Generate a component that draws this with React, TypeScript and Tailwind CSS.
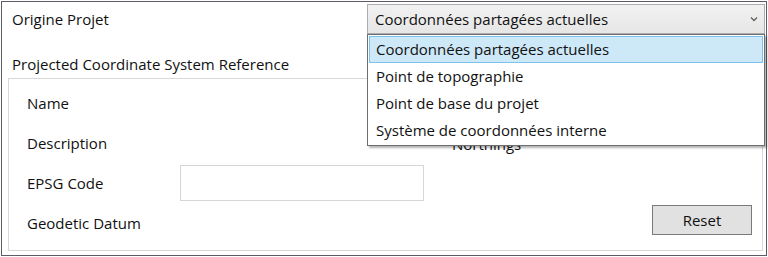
const OPTIONS = [
  "Coordonnées partagées actuelles",
  "Point de topographie",
  "Point de base du projet",
  "Système de coordonnées interne",
];

function Chevron() {
  return (
    <svg width="8" height="6" viewBox="0 0 8 6" className="shrink-0">
      <polyline points="1,1.5 4,4.5 7,1.5" fill="none" stroke="#606060" strokeWidth="1.3" />
    </svg>
  );
}

export default function App() {
  return (
    <div
      className="relative w-[768px] h-[257px] bg-white p-px text-[15px] text-[#111]"
      style={{ fontFamily: '"Open Sans", "Noto Sans", sans-serif' }}
    >
      <div className="h-full border border-[#5c5c66] flex flex-col">
        {/* Top row */}
        <div className="flex items-center h-[30px] mt-[2px]">
          <span className="pl-[10px]">Origine Projet</span>
          <div className="ml-auto mr-px w-[398px] h-[30px] flex items-center justify-between pl-[7px] pr-[6px] border border-[#adadad] bg-gradient-to-b from-[#f2f2f2] to-[#e6e6e6]">
            <span>{OPTIONS[0]}</span>
            <Chevron />
          </div>
        </div>

        {/* Group title */}
        <div className="mt-[20px] h-[20px] leading-[20px] pl-[10px]">
          Projected Coordinate System Reference
        </div>

        {/* Group box */}
        <div className="mt-[4px] ml-[6px] w-[755px] h-[173px] border border-[#d8d8d8] pt-[4px] pl-[18px] grid grid-cols-[153px_272px_1fr] grid-rows-[40px_40px_40px_40px] items-center">
          <span>Name</span>
          <span />
          <span />

          <span>Description</span>
          <span />
          <span className="mt-[2px]">Northings</span>

          <span>EPSG Code</span>
          <div className="w-[244px] h-[36px] border border-[#d6d6d6] bg-white" />
          <span />

          <span>Geodetic Datum</span>
          <span />
          <div className="self-start mt-[2px] justify-self-end mr-[10px] w-[100px] h-[30px] border border-[#7a7a7a] bg-[#e1e1e1] flex items-center justify-center">
            Reset
          </div>
        </div>
      </div>

      {/* Open dropdown list */}
      <div className="absolute left-[367px] top-[34px] w-[398px] border border-[#6e6e6e] bg-white py-px shadow-[2px_2px_2px_rgba(0,0,0,0.3)]">
        {OPTIONS.map((opt, i) => (
          <div
            key={opt}
            className={
              i === 0
                ? "h-[27px] flex items-center pl-[6px] mx-px border border-[#7cc2ea] bg-[#cde8f7]"
                : "h-[27px] flex items-center pl-[7px] mx-px"
            }
          >
            {opt}
          </div>
        ))}
      </div>
    </div>
  );
}
